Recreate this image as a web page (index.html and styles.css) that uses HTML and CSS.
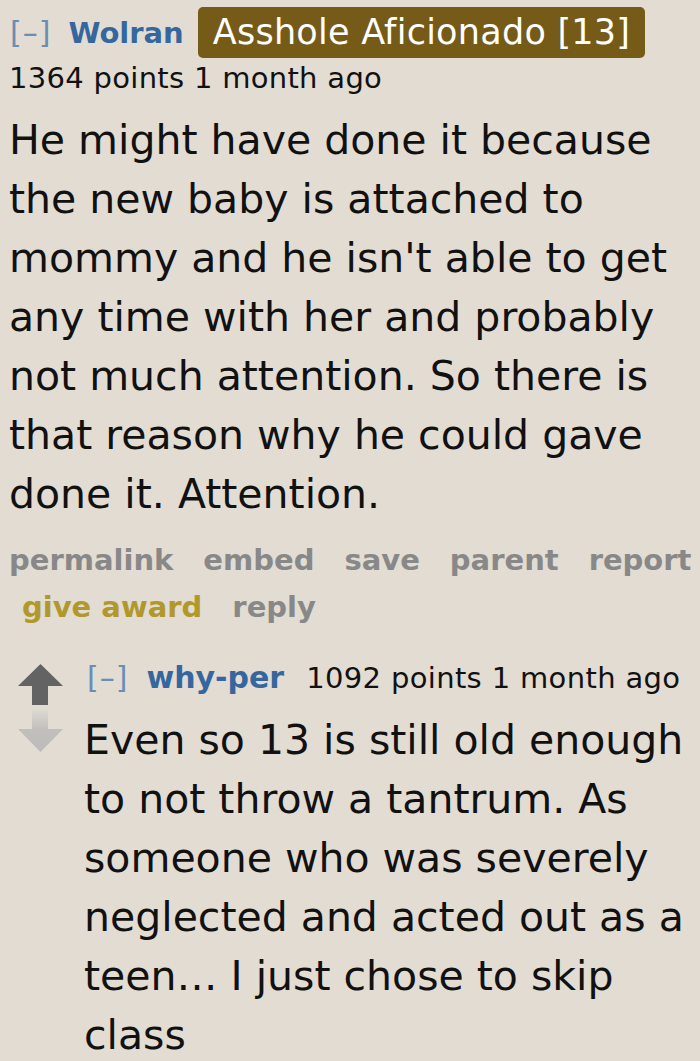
FILE: index.html
```html
<!DOCTYPE html>
<html>
<head>
<meta charset="utf-8">
<link rel="stylesheet" href="styles.css">
</head>
<body>
<div class="comment">
  <div class="tagline">
    <span class="expand">[–]</span>
    <span class="author">Wolran</span>
    <span class="flair">Asshole Aficionado [13]</span>
  </div>
  <div class="score">1364 points 1 month ago</div>
  <div class="md">He might have done it because the new baby is attached to mommy and he isn't able to get any time with her and probably not much attention. So there is that reason why he could gave done it. Attention.</div>
  <ul class="buttons">
    <li>permalink</li>
    <li>embed</li>
    <li>save</li>
    <li>parent</li>
    <li>report</li>
    <li class="award">give award</li>
    <li>reply</li>
  </ul>
  <div class="child">
    <div class="arrows">
      <svg class="arrow" width="45" height="41" viewBox="0 0 45 41"><path d="M22.5 0 L45 22 L30 22 L30 41 L14 41 L14 22 L0 22 Z" fill="#636363"/></svg>
      <svg class="arrow" width="45" height="42" viewBox="0 0 45 42"><defs><linearGradient id="g" x1="0" y1="0" x2="0" y2="1"><stop offset="0" stop-color="#dcd8d2"/><stop offset="0.45" stop-color="#c2c0bd"/><stop offset="1" stop-color="#bcbbb9"/></linearGradient></defs><path d="M14 0 L30 0 L30 19 L45 19 L22.5 42 L0 19 L14 19 Z" fill="url(#g)"/></svg>
    </div>
    <div class="entry">
      <div class="tagline2">
        <span class="expand small">[–]</span>
        <span class="author small">why-per</span>
        <span class="score2">1092 points 1 month ago</span>
      </div>
      <div class="md">Even so 13 is still old enough to not throw a tantrum. As someone who was severely neglected and acted out as a teen… I just chose to skip class</div>
    </div>
  </div>
</div>
</body>
</html>
```
FILE: styles.css
```css
html, body {
  margin: 0;
  padding: 0;
  background: #e2dcd3;
}
body {
  width: 700px;
  height: 1061px;
  overflow: hidden;
  font-family: "DejaVu Sans", Verdana, sans-serif;
  color: #111;
}
.comment {
  padding: 7px 0 0 9px;
}
.tagline {
  display: flex;
  align-items: baseline;
  height: 51px;
}
.expand {
  color: #6a8db5;
  font-size: 30px;
  letter-spacing: 1px;
  margin-left: 1px;
  margin-right: 17px;
}
.author {
  color: #35679e;
  font-weight: bold;
  font-size: 29px;
  margin-right: 14px;
}
.flair {
  align-self: center;
  background: #765a18;
  color: #fff;
  font-size: 35px;
  letter-spacing: 0.25px;
  border-radius: 5px;
  height: 51px;
  line-height: 51px;
  padding: 0 15px;
}
.tagline .expand, .tagline .author {
  line-height: 51px;
}
.score {
  font-size: 29px;
  letter-spacing: 0.3px;
  line-height: 38px;
  margin-top: 1px;
}
.md {
  font-size: 41px;
  line-height: 59px;
  margin-top: 14px;
}
.buttons {
  list-style: none;
  margin: 13px 0 0 0;
  padding: 0;
  display: flex;
  flex-wrap: wrap;
  font-weight: bold;
  font-size: 29px;
  color: #888888;
  line-height: 47px;
  column-gap: 30px;
}
.buttons li.award {
  color: #b1982b;
  margin-left: 13px;
}
.child {
  display: flex;
  margin-top: 28px;
  margin-left: 9px;
}
.arrows {
  display: flex;
  flex-direction: column;
  gap: 5px;
  width: 45px;
  padding-top: 5px;
}
.arrow {
  display: block;
}
.entry {
  margin-left: 21px;
}
.tagline2 {
  display: flex;
  align-items: baseline;
  line-height: 38px;
}
.expand.small {
  margin-left: 3px;
  margin-right: 18px;
}
.author.small {
  font-size: 30px;
  margin-right: 22px;
}
.score2 {
  font-size: 29px;
  letter-spacing: 0.35px;
}
.entry .md {
  margin-top: 14px;
}
```
